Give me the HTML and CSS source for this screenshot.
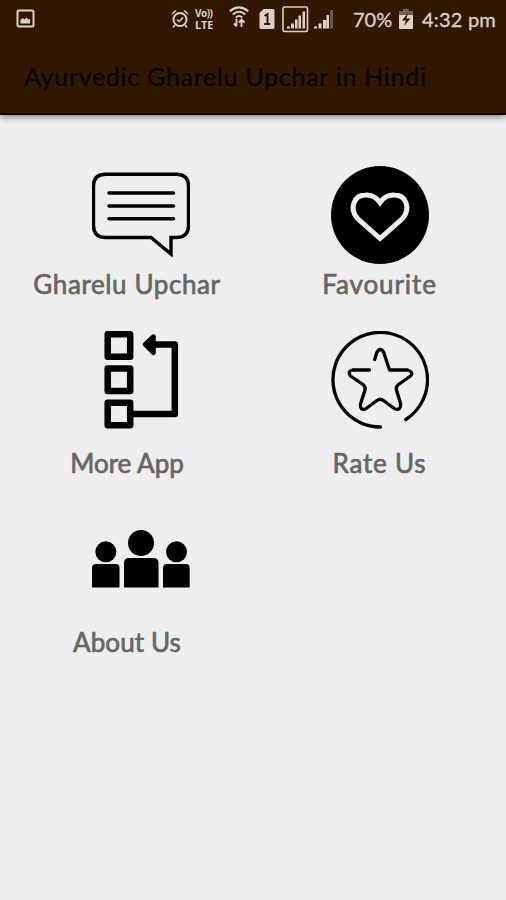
FILE: index.html
```html
<!DOCTYPE html>
<html lang="en">
<head>
<meta charset="utf-8">
<title>Ayurvedic Gharelu Upchar in Hindi</title>
<link rel="stylesheet" href="styles.css">
</head>
<body>
<header class="header">
  <div class="status">
    <svg class="ic-image" width="20" height="20" viewBox="0 0 20 20"><rect x="1.500" y="1.500" width="16" height="16" rx="1.500" fill="none" stroke="currentColor" stroke-width="2"/><path d="M4.500 14.500V11l2-2 2 1.500 2-2 1.500 2 2-.5v4.500z" fill="currentColor"/></svg>
    <svg class="ic-alarm" width="18" height="20" viewBox="0 0 18 20" fill="none" stroke="currentColor"><circle cx="9" cy="10.500" r="6.500" stroke-width="2"/><path d="M6 10.500l2.300 2L12 8.500" stroke-width="1.500"/><path d="M1 5l4-3.500M17 5l-4-3.500M4 16l-2 2.500M14 16l2 2.500" stroke-width="1.600"/></svg>
    <span class="volte"><span class="vo">Vo))</span><span class="lte">LTE</span></span>
    <svg class="ic-wifi" width="20" height="22" viewBox="0 0 20 22" fill="none" stroke="currentColor"><path d="M.8 5.200Q10-2.500 19.200 5.200M3.800 8.500Q10 3 16.200 8.500M6.800 11.500Q10 8.500 13.200 11.500" stroke-width="2"/><path d="M7.500 13v7M5 17.500l2.500 2.800M12.500 21v-7M10 16.500l2.500-2.800 3 2.800" stroke-width="1.900"/></svg>
    <svg class="ic-sim" width="16" height="20" viewBox="0 0 16 20"><path d="M4.500 0H14q1.500 0 1.500 1.500v17q0 1.500-1.500 1.500H2Q.5 20 .5 18.500V4z" fill="currentColor"/><path d="M5.500 7l3-2v10M5.200 15h6" fill="none" stroke="#321800" stroke-width="2"/></svg>
    <svg class="ic-sig1" width="27" height="27" viewBox="0 0 27 27"><rect x="1" y="1" width="24.500" height="24.500" rx="1.500" fill="none" stroke="currentColor" stroke-width="1.600"/><path d="M5 22.500v-2h3v2zM9 22.500v-5h3v5zM13 22.500v-9h2.500v9zM16.500 22.500V9.500H19v13zM20.500 22.500v-17H23v17z" fill="currentColor"/></svg>
    <svg class="ic-sig2" width="20" height="20" viewBox="0 0 20 20" fill="currentColor"><path d="M0 19.500v-2h3v2zM4.500 19.500v-5h3v5zM9 19.500v-8.500h3.500v8.500z"/><path d="M12.500 19.500V6H15v13.500z"/><path d="M16 19.500V1h3v18.500z" opacity=".35"/></svg>
    <span class="battery">70%</span>
    <svg class="ic-bat" width="14" height="20" viewBox="0 0 14 20"><path d="M4 0h6v2h4v5H0V2h4z" fill="currentColor" opacity=".4"/><path d="M0 6h14v14H0z" fill="currentColor"/><path d="M9 4l-6 7.500h4L5 17l6.500-7.500H7.500z" fill="#321800"/></svg>
    <span class="clock">4:32 pm</span>
  </div>
  <h1 class="title">Ayurvedic Gharelu Upchar in Hindi</h1>
</header>
<main class="menu">
  <div class="item">
    <svg class="icon" viewBox="92 166 98 98" fill="none" stroke="#000"><path d="M105.500 174.300h71q12 0 12 12v39.200q0 12-12 12H171V254l-20-16.500h-45.500q-12 0-12-12v-39.200q0-12 12-12z" stroke-width="3.400"/><path d="M109 193h64.500M109 206h64.500M109 218.700h64.500" stroke-width="3.600" stroke-linecap="round"/></svg>
    <span class="label left upchar">Gharelu Upchar</span>
  </div>
  <div class="item">
    <svg class="icon" viewBox="331 166 98 98"><circle cx="380" cy="215" r="49"/><path d="M380 238.500L357.500 218.500C348.500 208 354.500 195 365.500 195Q374.500 194.500 380 202.500Q385.500 194.500 394.500 195C405.500 195 411.500 208 402.500 218.500Z" fill="none" stroke="#eee" stroke-width="5"/></svg>
    <span class="label fav">Favourite</span>
  </div>
  <div class="item tall">
    <svg class="icon" viewBox="92 331 98 98" fill="none" stroke="#000" stroke-width="6.500" stroke-linejoin="round"><path d="M107.700 334.200h22.500v22.500h-22.500zM107.700 368.500h22.500V391h-22.500zM107.700 402.800h22.500v22.500h-22.500z"/><path d="M131 414h43.800v-69.500H148"/><path d="M153.500 336.500l-8.500 8 8.500 8.500z" fill="#000" stroke-width="4.500"/></svg>
    <span class="label left more">More App</span>
  </div>
  <div class="item tall">
    <svg class="icon" viewBox="331 331 98 98" fill="none" stroke="#000" stroke-width="3.300" stroke-linecap="round" stroke-linejoin="round"><path d="M380.500 427A47.300 47.300 0 1 1 405.800 419.500"/><path d="M374.700 359.500L376.800 352.500Q380.300 346.500 383.800 352.500L389.500 370H407.500Q414 372 410.500 376L398.500 384.500Q395.500 387 396.500 390L400.700 404Q401 410.500 395 409L383.500 400.500Q380.300 398 377 400.500L365.500 409Q359.500 410.500 360.500 404L365 390Q366 387 363 384.500L350.500 376Q347 371.500 352.500 370H369.500"/></svg>
    <span class="label rate">Rate Us</span>
  </div>
  <div class="item tall">
    <svg class="icon" viewBox="92 510 98 98"><circle cx="105.800" cy="551.800" r="10.500"/><circle cx="141" cy="543" r="13"/><circle cx="176.500" cy="551.800" r="10.500"/><path d="M92 587.500V568q0-4 4-4h19.500q4 0 4 4v19.500zM124 587.500V563q0-5 5-5h24.500q5 0 5 5v24.500zM163 587.500V568q0-4 4-4h18.700q4 0 4 4v19.500z"/></svg>
    <span class="label left about">About Us</span>
  </div>
</main>
</body>
</html>
```
FILE: styles.css
```css
* { box-sizing: border-box; }
body {
  margin: 0;
  min-height: 900px;
  background: #eee;
  font-family: "Choco Cooky", Lato, "Open Sans", sans-serif;
}
.header {
  height: 115px;
  background: #321800;
  border-bottom: 2px solid #0a0400;
  box-shadow: 0 2px 7px rgba(0, 0, 0, .45);
}
.status {
  display: flex;
  align-items: center;
  height: 38px;
  padding-left: 16px;
  color: #ddd0c8;
  white-space: nowrap;
}
.status svg { flex: none; }
.ic-alarm { margin-left: 135px; }
.volte {
  display: flex;
  flex-direction: column;
  gap: 1px;
  width: 20px;
  margin-left: 6px;
  font: bold 10px/11px "Open Sans", sans-serif;
}
.vo { font-size: 10px; line-height: 10px; letter-spacing: -.5px; }
.lte { font-size: 11px; line-height: 11px; letter-spacing: -.2px; }
.ic-wifi { margin: 0 0 4px 14px; }
.ic-sim { margin-left: 10px; }
.ic-sig1 { margin-left: 7px; }
.ic-sig2 { margin-left: 5px; }
.battery {
  width: 40px;
  margin-left: 19px;
  font-size: 20px;
  -webkit-text-stroke: .3px;
}
.ic-bat { margin-left: 6px; }
.clock {
  margin-left: 9px;
  font-size: 20px;
  letter-spacing: .2px;
  -webkit-text-stroke: .3px;
}
.title {
  margin: 0;
  padding-left: 24px;
  color: #080300;
  font-size: 25px;
  font-weight: 400;
  line-height: 76px;
  letter-spacing: .72px;
  white-space: nowrap;
  -webkit-text-stroke: .3px;
}
.menu {
  display: grid;
  grid-template-columns: 239px 239px;
  grid-template-rows: 165px 179px 179px;
  padding: 51px 0 0 21px;
}
.item {
  display: flex;
  flex-direction: column;
  align-items: center;
}
.icon { width: 98px; height: 98px; }
.label {
  margin-top: 4px;
  color: #666;
  font-size: 26px;
  line-height: 32px;
  white-space: nowrap;
  -webkit-text-stroke: .7px #666;
}
.tall .label { margin-top: 18px; }
.left { margin-right: 27px; }
.upchar { letter-spacing: .6px; }
.fav { letter-spacing: .9px; }
.rate { letter-spacing: .8px; }
.about { letter-spacing: .1px; }
```
